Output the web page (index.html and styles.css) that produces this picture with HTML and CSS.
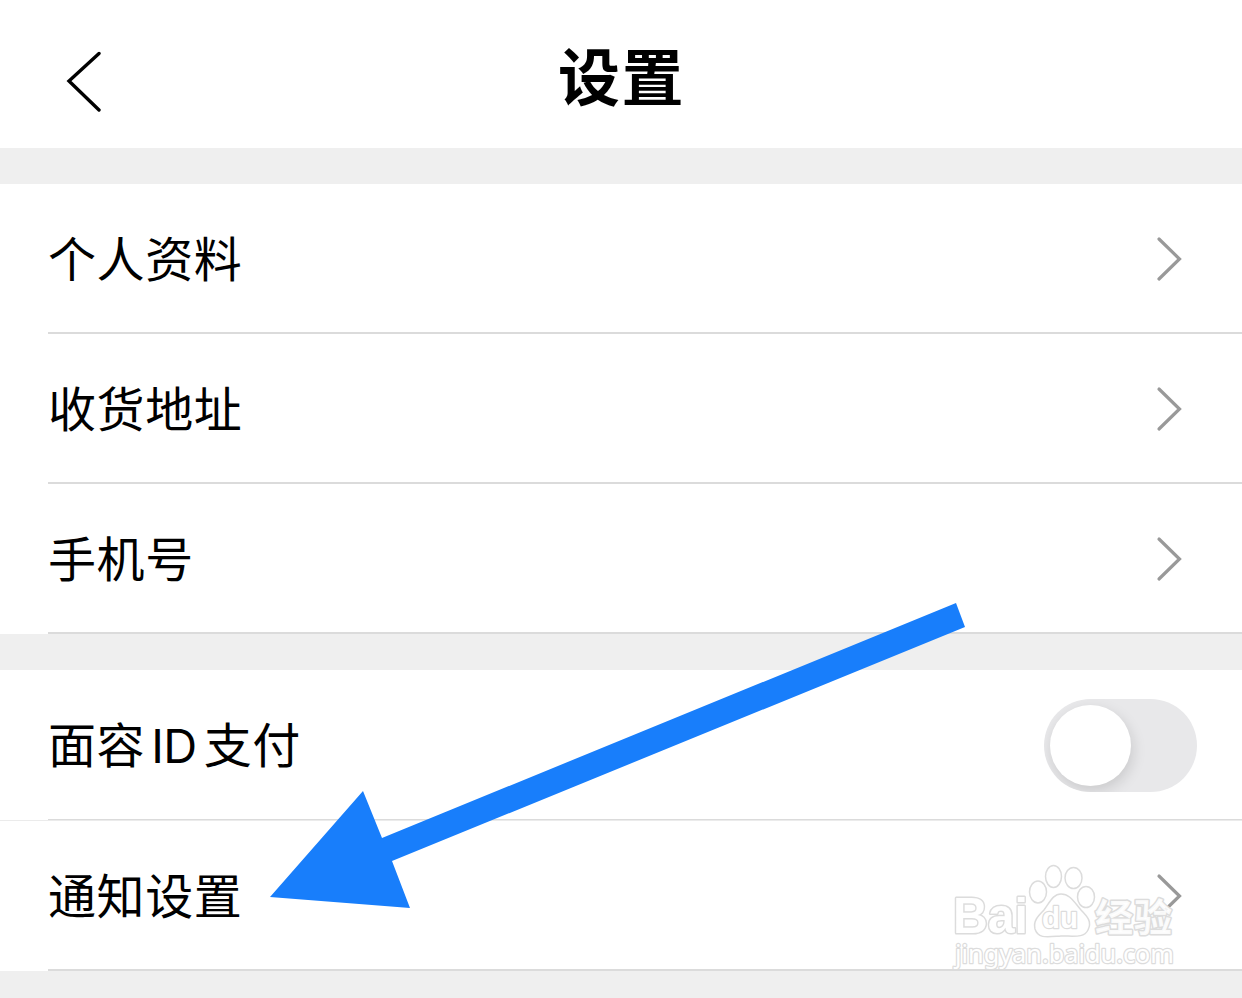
FILE: index.html
```
<!DOCTYPE html>
<html lang="zh-CN">
  <head>
    <title>设置</title>
    <meta charset="utf-8" />
    <link rel="stylesheet" href="styles.css">
  </head>
<body>

<div class="header">
    <svg class="back" width="40" height="64" viewBox="0 0 40 64"><path d="M35 5.5 L5 33 L35 62" /></svg>
    <h1>设置</h1>
</div>

<div class="group">
    <div class="row"><span>个人资料</span><svg class="more" width="30" height="48" viewBox="0 0 30 48"><path d="M5 5 L25.5 25 L5 45" /></svg></div>
    <div class="row"><span>收货地址</span><svg class="more" width="30" height="48" viewBox="0 0 30 48"><path d="M5 5 L25.5 25 L5 45" /></svg></div>
    <div class="row"><span>手机号</span><svg class="more" width="30" height="48" viewBox="0 0 30 48"><path d="M5 5 L25.5 25 L5 45" /></svg></div>
</div>

<div class="group">
    <div class="pay">
        <div class="row"><span>面容<b>ID</b>支付</span><div class="switch"><div class="knob"></div></div></div>
    </div>
    <div class="row"><span>通知设置</span><svg class="more" width="30" height="48" viewBox="0 0 30 48"><path d="M5 5 L25.5 25 L5 45" /></svg></div>
</div>

<svg class="arrow" width="696" height="306" viewBox="0 0 696 306">
    <path d="M0 295 L93 189 L112 236 L686 1 L695 25 L122 259 L140 306 Z" />
</svg>

<svg class="mark" width="240" height="120" viewBox="0 0 240 120">
    <text class="bai" x="3" y="72" textLength="75" lengthAdjust="spacingAndGlyphs">Bai</text>
    <ellipse cx="88" cy="31" rx="8.5" ry="11" />
    <ellipse cx="103.5" cy="15.5" rx="8" ry="11" />
    <ellipse cx="123.5" cy="17" rx="8.5" ry="10.5" />
    <ellipse cx="136" cy="36" rx="8.5" ry="10.5" />
    <path d="M111 33 C120 33 124 41 131 49 C138 56 142 61 138 69 C134 77 125 75 111 75 C97 76 88 78 85 68 C83 60 88 55 94 49 C100 41 103 33 111 33 Z" />
    <text class="du" x="92" y="67" textLength="36" lengthAdjust="spacingAndGlyphs">du</text>
    <text class="jing" x="145" y="70" textLength="77">经验</text>
    <text class="site" x="5" y="102" textLength="219" lengthAdjust="spacingAndGlyphs">jingyan.baidu.com</text>
</svg>

</body>
</html>
```

FILE: styles.css
```
body {
    position: relative;
    height: 998px;
    margin: 0;
    overflow: hidden;
    background: #efefef;
    color: #000;
    font-family: "Noto Sans CJK SC", sans-serif;
}
.header {
    display: flex;
    align-items: center;
    height: 148px;
    padding: 0 64px;
    background: #fff;
}
.header h1 {
    flex: 1;
    margin: 0 39px 0 0;
    font-size: 62px;
    line-height: 90px;
    letter-spacing: 1.5px;
    text-align: center;
}
.back {
    padding-top: 12px;
}
.back path, .more path {
    fill: none;
    stroke: #000;
    stroke-width: 3.4;
    stroke-linecap: round;
}
.group {
    margin-top: 36px;
    padding-left: 48px;
    background: #fff;
}
.row {
    display: flex;
    align-items: center;
    justify-content: space-between;
    box-sizing: border-box;
    height: 150px;
    padding-right: 58px;
    border-bottom: 2px solid #dbdbdb;
    font-size: 48px;
    letter-spacing: 0.6px;
}
.row span {
    padding-bottom: 5px;
}
.more path {
    stroke: #999;
    stroke-width: 3.2;
}
.pay {
    margin-left: -48px;
    padding-left: 48px;
    border-bottom: 1px solid #ebebeb;
}
.pay .row {
    padding-right: 45px;
    border-bottom-width: 1px;
}
.pay b {
    margin: 0 7px 0 6px;
    font-family: Inter, sans-serif;
    font-size: 47px;
    font-weight: normal;
    letter-spacing: -0.5px;
}
.switch {
    box-sizing: border-box;
    width: 153px;
    height: 93px;
    margin-top: 2px;
    padding: 6px;
    border-radius: 47px;
    background: #e8e8ea;
    overflow: hidden;
}
.knob {
    width: 81px;
    height: 81px;
    border-radius: 50%;
    background: #fff;
    box-shadow: 2px 5px 14px rgba(0, 0, 0, 0.13);
}
.arrow {
    position: absolute;
    left: 270px;
    top: 602px;
    fill: #187efb;
}
.mark {
    position: absolute;
    left: 950px;
    top: 861px;
    fill: #fff;
    fill-opacity: 0.8;
    stroke: #dcdcdc;
    stroke-width: 1.5;
}
.mark text {
    fill-opacity: 1;
    paint-order: stroke;
    stroke-linejoin: round;
}
.bai, .du {
    font-family: "Liberation Sans", sans-serif;
    font-weight: bold;
    font-size: 50px;
    stroke-width: 3;
}
.du {
    font-size: 30px;
    stroke-width: 2.5;
}
.mark .jing {
    font-size: 38px;
    font-weight: bold;
    fill-opacity: 0.9;
    stroke-width: 3;
}
.site {
    font-family: "Noto Sans", sans-serif;
    font-size: 26px;
    stroke-width: 2.5;
}
```
